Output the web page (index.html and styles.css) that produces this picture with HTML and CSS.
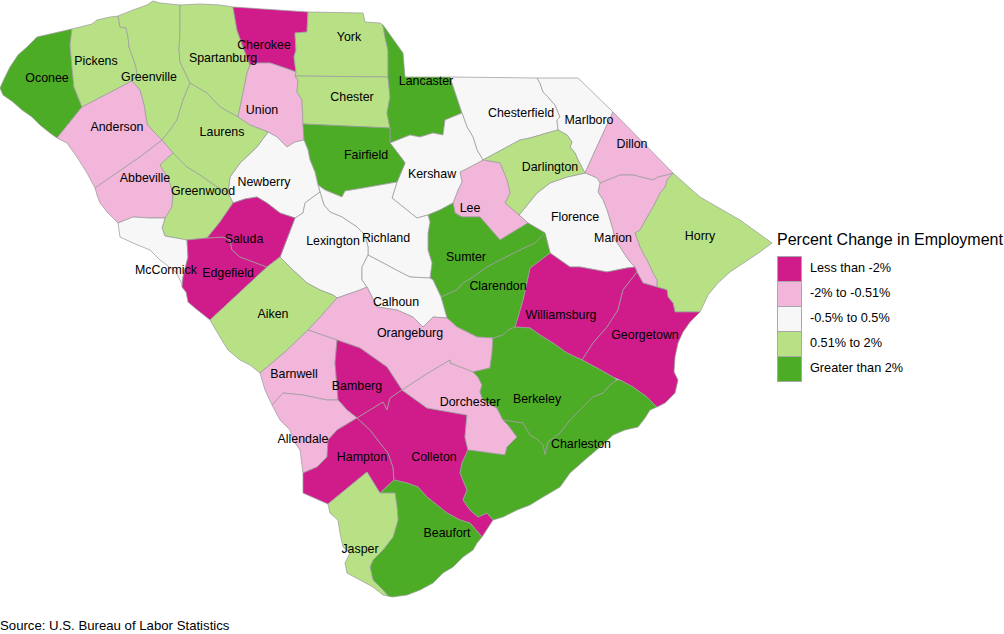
FILE: index.html
```html
<!DOCTYPE html>
<html lang="en">
<head>
<meta charset="utf-8">
<title>Percent Change in Employment — South Carolina Counties</title>
<link rel="stylesheet" href="styles.css">
</head>
<body>
<div class="page">
  <div class="main">
    <svg class="map" viewBox="0 0 775 617" width="775" height="617" xmlns="http://www.w3.org/2000/svg">
      <g class="counties">
        <polygon class="county c5" points="37,37 72,29 70,45 72,67 74,87 82,107 57,138 50,133 40,125 32,117 22,110 13,102 3,95 0,88 5,77 10,67 18,55 27,47"/>
        <polygon class="county c4" points="72,29 92,24 97,20 110,17 118,16 120,27 126,28 128,37 129,47 133,58 136,67 137,75 132,81 82,107 74,87 72,67 70,45"/>
        <polygon class="county c4" points="118,16 133,10 147,5 153,1 160,3 170,4 180,5 180,30 179,50 180,62 190,83 183,100 177,120 170,130 162,140 153,131 147,124 144,105 140,90 132,81 137,75 136,67 133,58 129,47 128,37 126,28 120,27"/>
        <polygon class="county c4" points="180,5 200,4 220,5 233,7 237,30 243,47 250,65 247,73 243,93 238,117 220,107 207,93 190,83 180,62 179,50 180,30"/>
        <polygon class="county c1" points="233,7 308,12 307,32 295,33 296,50 294,57 296,72 285,68 270,63 258,63 250,65 243,47 237,30"/>
        <polygon class="county c4" points="308,12 363,13 365,22 380,23 383,25 385,37 388,50 388,77 295,76 296,72 294,57 296,50 295,33 307,32"/>
        <polygon class="county c2" points="250,65 258,63 270,63 285,68 296,72 295,76 298,80 297,92 302,100 303,124 304,140 295,142 287,147 277,137 268,132 250,125 238,117 243,93 247,73"/>
        <polygon class="county c4" points="295,76 388,77 390,97 387,113 390,128 303,124 302,100 297,92 298,80"/>
        <polygon class="county c5" points="383,25 403,53 405,77 450,77 462,113 445,120 443,135 433,133 420,137 410,135 390,143 390,128 387,113 390,97 388,77 388,50 385,37"/>
        <polygon class="county c3" points="450,77 537,78 540,83 543,92 548,97 555,105 560,117 557,120 558,130 547,133 530,138 520,140 507,147 483,160 477,150 473,137 467,127 462,113"/>
        <polygon class="county c3" points="537,78 578,78 613,112 600,140 585,173 578,160 575,153 570,147 572,142 567,135 558,130 557,120 560,117 555,105 548,97 543,92 540,83"/>
        <polygon class="county c2" points="613,112 673,173 667,175 658,177 653,180 633,175 620,175 600,183 597,178 590,175 585,173 600,140"/>
        <polygon class="county c4" points="673,173 700,197 740,220 772,243 760,252 745,262 730,272 718,283 708,295 700,312 675,312 673,303 668,297 667,290 657,287 657,280 653,273 647,260 643,253 640,247 635,233 640,230 647,217 653,207 660,193 665,187 667,180"/>
        <polygon class="county c2" points="600,183 620,175 633,175 653,180 658,177 667,175 673,173 667,180 665,187 660,193 653,207 647,217 640,230 635,233 640,247 643,253 647,260 653,273 657,280 657,287 643,283 637,272 635,267 630,262 625,255 620,247 615,240 613,230 610,220 607,210 603,200 598,192"/>
        <polygon class="county c3" points="519,215 537,193 550,183 567,177 585,173 590,175 597,178 600,183 598,192 603,200 607,210 610,220 613,230 615,240 620,247 625,255 630,262 635,267 627,268 607,272 580,267 570,267 550,253 545,233 528,223"/>
        <polygon class="county c4" points="483,160 507,147 520,140 530,138 547,133 558,130 567,135 572,142 570,147 575,153 578,160 585,173 567,177 550,183 537,193 519,215 505,203 510,193 507,180 500,163"/>
        <polygon class="county c2" points="483,160 500,163 507,180 510,193 505,203 519,215 528,223 513,232 500,240 487,225 480,217 462,217 455,213 453,203 458,190 462,182 460,172 470,167"/>
        <polygon class="county c1" points="550,253 570,267 580,267 607,272 627,268 635,267 637,272 623,290 618,310 607,327 593,343 582,360 567,353 553,343 543,337 530,328 515,327 523,300 530,268"/>
        <polygon class="county c1" points="637,272 643,283 657,287 667,290 668,297 673,303 675,312 700,312 690,322 683,332 678,343 675,357 674,372 678,380 675,393 665,403 657,407 647,397 633,387 620,380 613,377 597,368 582,360 593,343 607,327 618,310 623,290"/>
        <polygon class="county c3" points="390,143 410,135 420,137 433,133 443,135 445,120 462,113 467,127 473,137 477,150 483,160 470,167 460,172 462,182 458,190 453,203 440,210 428,215 417,218 392,198 397,182 405,163 403,160"/>
        <polygon class="county c5" points="303,124 390,128 390,143 403,160 405,163 397,182 380,185 363,188 345,191 342,197 325,190 318,185 315,172 310,160 308,150 304,140"/>
        <polygon class="county c5" points="428,215 440,210 453,203 455,213 462,217 480,217 487,225 500,240 513,232 528,223 545,233 535,243 520,250 500,260 487,267 473,277 463,283 457,290 441,297 433,280 430,278 432,263 428,250 428,233 430,222"/>
        <polygon class="county c5" points="545,233 550,253 530,268 523,300 515,327 508,330 503,335 493,338 477,337 467,332 457,327 447,318 441,297 457,290 463,283 473,277 487,267 500,260 520,250 535,243"/>
        <polygon class="county c3" points="318,185 325,190 342,197 345,191 363,188 380,185 397,182 392,198 417,218 428,215 430,222 428,233 428,250 432,263 430,278 410,277 400,272 387,265 368,255 368,247 365,235 357,227 342,217 330,212 324,205 320,192"/>
        <polygon class="county c3" points="268,132 277,137 287,147 295,142 304,140 308,150 310,160 315,172 318,185 320,192 313,197 305,203 303,213 295,218 280,213 267,203 257,197 245,199 233,203 228,193 230,177 240,163 257,147"/>
        <polygon class="county c3" points="295,218 303,213 305,203 313,197 320,192 324,205 330,212 342,217 357,227 365,235 368,247 368,255 362,267 362,280 367,287 360,290 337,298 333,295 320,290 307,283 293,270 280,257"/>
        <polygon class="county c4" points="190,83 207,93 220,107 238,117 250,125 268,132 257,147 240,163 230,177 228,193 217,187 200,175 187,167 173,153 162,140 170,130 177,120 183,100"/>
        <polygon class="county c2" points="132,81 140,90 144,105 147,124 153,131 162,140 140,157 118,172 95,188 87,173 77,157 67,143 57,138 82,107"/>
        <polygon class="county c2" points="95,188 118,172 140,157 162,140 173,153 160,165 168,178 173,193 172,207 165,218 150,218 133,217 118,223 108,213 100,203 97,195"/>
        <polygon class="county c4" points="173,153 187,167 200,175 217,187 228,193 233,203 220,222 207,238 187,240 165,236 162,228 165,218 172,207 173,193 168,178 160,165"/>
        <polygon class="county c3" points="118,223 133,217 150,218 165,218 162,228 165,236 187,240 188,257 183,277 182,287 186,292 176,272 160,260 150,250 133,243 120,237"/>
        <polygon class="county c1" points="187,240 207,238 223,237 230,240 232,250 240,257 267,267 210,320 195,308 188,302 186,292 182,287 183,277 188,257"/>
        <polygon class="county c1" points="233,203 245,199 257,197 267,203 280,213 295,218 280,257 267,267 240,257 232,250 230,240 223,237 207,238 220,222"/>
        <polygon class="county c4" points="210,320 267,267 280,257 293,270 307,283 320,290 333,295 337,298 322,315 308,330 285,352 260,373 250,365 240,360 228,350 220,337"/>
        <polygon class="county c3" points="368,255 387,265 400,272 410,277 430,278 433,280 441,297 447,318 433,317 423,327 413,317 397,310 377,307 372,297 367,287 362,280 362,267"/>
        <polygon class="county c2" points="308,330 322,315 337,298 360,290 367,287 372,297 377,307 397,310 413,317 423,327 433,317 447,318 457,327 467,332 477,337 493,338 492,353 490,368 473,372 450,363 450,360 425,375 402,390 387,367 360,348 337,340"/>
        <polygon class="county c2" points="260,373 285,352 308,330 337,340 335,363 337,387 338,400 327,400 303,395 283,393 272,405 265,390"/>
        <polygon class="county c1" points="337,340 360,348 387,367 402,390 390,398 387,410 383,402 357,418 347,410 338,400 337,387 335,363"/>
        <polygon class="county c2" points="272,405 283,393 303,395 327,400 338,400 347,410 357,418 337,430 328,440 327,457 317,467 303,473 300,450 293,440 290,430 280,420"/>
        <polygon class="county c1" points="357,418 370,430 380,443 388,453 393,467 394,480 380,493 378,490 367,472 328,504 303,493 303,473 317,467 327,457 328,440 337,430"/>
        <polygon class="county c1" points="402,390 427,408 467,415 465,437 468,450 462,463 460,473 467,490 463,500 470,510 478,517 487,513 493,520 482,537 470,523 460,520 447,513 437,505 427,497 418,487 407,483 394,480 393,467 388,453 380,443 370,430 357,418 383,402 387,410 390,398"/>
        <polygon class="county c2" points="402,390 425,375 450,360 450,363 473,372 478,377 482,385 480,392 483,400 497,408 503,420 508,425 517,437 507,447 505,455 468,450 465,437 467,415 427,408"/>
        <polygon class="county c5" points="493,338 503,335 508,330 515,327 530,328 543,337 553,343 567,353 582,360 597,368 613,377 617,380 610,385 603,393 593,397 583,407 570,420 560,433 548,442 545,455 543,445 538,440 530,435 523,423 503,420 497,408 483,400 480,392 482,385 478,377 473,372 490,368 492,353"/>
        <polygon class="county c5" points="503,420 523,423 530,435 538,440 543,445 545,455 548,442 560,433 570,420 583,407 593,397 603,393 610,385 617,380 620,380 633,387 647,397 657,407 650,410 645,418 638,427 625,430 613,435 600,447 587,458 570,473 560,487 543,497 530,505 517,510 503,517 493,520 487,513 478,517 470,510 463,500 467,490 460,473 462,463 468,450 505,455 507,447 517,437 508,425"/>
        <polygon class="county c5" points="394,480 407,483 418,487 427,497 437,505 447,513 460,520 470,523 482,537 477,543 473,550 463,557 453,567 443,573 433,583 420,590 407,595 392,597 388,596 383,590 373,580 370,567 373,560 383,550 393,537 398,520 397,507 395,493 380,493"/>
        <polygon class="county c4" points="328,504 367,472 378,490 380,493 395,493 397,507 398,520 393,537 383,550 373,560 370,567 373,580 383,590 388,596 383,595 373,587 360,580 347,573 345,563 350,553 343,547 340,533 338,520 330,513"/>
      </g>
      <g class="labels">
        <text class="lbl" x="47" y="82">Oconee</text>
        <text class="lbl" x="96" y="65">Pickens</text>
        <text class="lbl" x="149" y="81">Greenville</text>
        <text class="lbl" x="223" y="62">Spartanburg</text>
        <text class="lbl" x="264" y="49">Cherokee</text>
        <text class="lbl" x="349" y="41">York</text>
        <text class="lbl" x="352" y="101">Chester</text>
        <text class="lbl" x="426" y="85">Lancaster</text>
        <text class="lbl" x="262" y="114">Union</text>
        <text class="lbl" x="366" y="159">Fairfield</text>
        <text class="lbl" x="432" y="178">Kershaw</text>
        <text class="lbl" x="264" y="186">Newberry</text>
        <text class="lbl" x="117" y="131">Anderson</text>
        <text class="lbl" x="222" y="136">Laurens</text>
        <text class="lbl" x="145" y="182">Abbeville</text>
        <text class="lbl" x="203" y="195">Greenwood</text>
        <text class="lbl" x="244" y="243">Saluda</text>
        <text class="lbl" x="228" y="277">Edgefield</text>
        <text class="lbl" x="166" y="274">McCormick</text>
        <text class="lbl" x="273" y="318">Aiken</text>
        <text class="lbl" x="333" y="245">Lexington</text>
        <text class="lbl" x="386" y="242">Richland</text>
        <text class="lbl" x="396" y="306">Calhoun</text>
        <text class="lbl" x="410" y="337">Orangeburg</text>
        <text class="lbl" x="466" y="261">Sumter</text>
        <text class="lbl" x="498" y="290">Clarendon</text>
        <text class="lbl" x="470" y="212">Lee</text>
        <text class="lbl" x="521" y="117">Chesterfield</text>
        <text class="lbl" x="589" y="124">Marlboro</text>
        <text class="lbl" x="632" y="148">Dillon</text>
        <text class="lbl" x="550" y="171">Darlington</text>
        <text class="lbl" x="575" y="221">Florence</text>
        <text class="lbl" x="613" y="242">Marion</text>
        <text class="lbl" x="700" y="240">Horry</text>
        <text class="lbl" x="561" y="319">Williamsburg</text>
        <text class="lbl" x="645" y="339">Georgetown</text>
        <text class="lbl" x="537" y="403">Berkeley</text>
        <text class="lbl" x="470" y="406">Dorchester</text>
        <text class="lbl" x="581" y="448">Charleston</text>
        <text class="lbl" x="434" y="461">Colleton</text>
        <text class="lbl" x="362" y="461">Hampton</text>
        <text class="lbl" x="357" y="390">Bamberg</text>
        <text class="lbl" x="294" y="378">Barnwell</text>
        <text class="lbl" x="303" y="443">Allendale</text>
        <text class="lbl" x="447" y="537">Beaufort</text>
        <text class="lbl" x="360" y="553">Jasper</text>
      </g>
    </svg>
    <div class="legend">
      <p class="legend-title">Percent Change in Employment</p>
      <ul class="legend-list">
        <li class="legend-item"><span class="swatch c1bg"></span><span class="legend-label">Less than -2%</span></li>
        <li class="legend-item"><span class="swatch c2bg"></span><span class="legend-label">-2% to -0.51%</span></li>
        <li class="legend-item"><span class="swatch c3bg"></span><span class="legend-label">-0.5% to 0.5%</span></li>
        <li class="legend-item"><span class="swatch c4bg"></span><span class="legend-label">0.51% to 2%</span></li>
        <li class="legend-item"><span class="swatch c5bg"></span><span class="legend-label">Greater than 2%</span></li>
      </ul>
    </div>
  </div>
  <p class="source">Source: U.S. Bureau of Labor Statistics</p>
</div>
</body>
</html>
```

FILE: styles.css
```css
html, body {
  margin: 0;
  padding: 0;
  background: #ffffff;
}

.page {
  width: 1004px;
  height: 634px;
  overflow: hidden;
  font-family: "Liberation Sans", Arial, sans-serif;
  color: #000000;
}

.main {
  display: flex;
  height: 617px;
}

.map {
  display: block;
  flex: none;
  width: 775px;
  height: 617px;
}

.county {
  stroke: #9c9c9c;
  stroke-width: 0.75;
  stroke-linejoin: round;
}

.c1 { fill: #d01c8b; }
.c2 { fill: #f1b6da; }
.c3 { fill: #f7f7f7; }
.c4 { fill: #b8e186; }
.c5 { fill: #4dac26; }

.lbl {
  font-family: "Liberation Sans", Arial, sans-serif;
  font-size: 12.4px;
  fill: #000000;
  text-anchor: middle;
}

.legend {
  margin: 231px 0 0 2px;
  display: flex;
  flex-direction: column;
}

.legend-title {
  margin: 0 0 7px;
  font-size: 16px;
  line-height: 18px;
  white-space: nowrap;
}

.legend-list {
  list-style: none;
  margin: 0;
  padding: 0;
}

.legend-item {
  display: flex;
  align-items: flex-start;
  gap: 8px;
  height: 25px;
  font-size: 12.7px;
}

.legend-label {
  line-height: 25px;
  white-space: nowrap;
}

.swatch {
  display: block;
  flex: none;
  width: 25px;
  height: 26px;
  margin-bottom: -1px;
  box-sizing: border-box;
  border: 1px solid #a8a8a8;
}

.c1bg { background: #d01c8b; }
.c2bg { background: #f1b6da; }
.c3bg { background: #f7f7f7; }
.c4bg { background: #b8e186; }
.c5bg { background: #4dac26; }

.source {
  margin: 0;
  font-size: 13.2px;
  line-height: 17px;
  white-space: nowrap;
}
```
